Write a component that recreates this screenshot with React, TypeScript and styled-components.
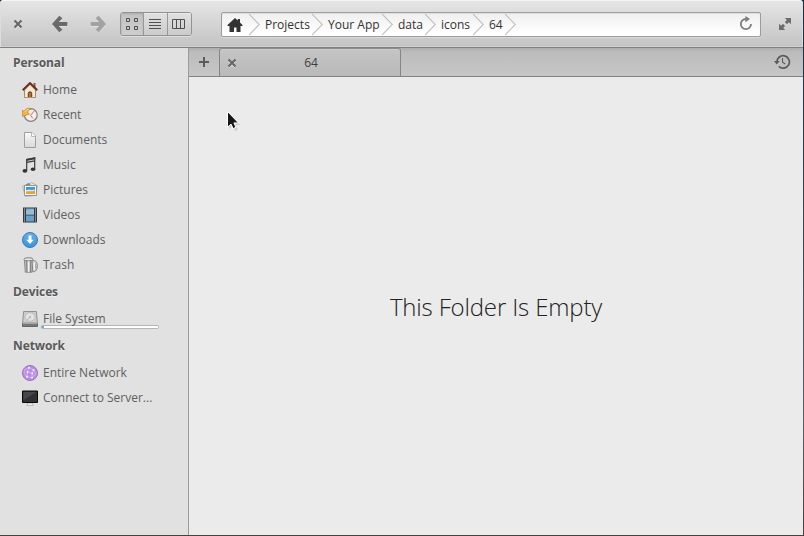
import React from "react";
import styled, { createGlobalStyle } from "styled-components";

const GlobalStyle = createGlobalStyle`
  * { box-sizing: border-box; }
  html, body { margin: 0; padding: 0; overflow: hidden; background: #555353; }
  body { font-family: "Open Sans", "Noto Sans", sans-serif; font-size: 12px; color: #4d4d4d; }
  svg { display: block; flex: none; }
`;

const Desktop = styled.div`
  width: 804px;
  height: 536px;
  background: linear-gradient(to bottom, #16304f 0, #243044 70px, #5d5d60 420px, #4b4040 100%);
  padding: 0 1px 1px 0;
`;

const Window = styled.div`
  height: 535px;
  display: flex;
  flex-direction: column;
  background: #ebebeb;
  border-radius: 4px 4px 0 0;
  overflow: hidden;
`;

const HeaderBar = styled.header`
  height: 48px;
  flex: none;
  display: flex;
  align-items: flex-start;
  padding-top: 12px;
  background: linear-gradient(#e6e6e6, #c3c3c3);
  border-bottom: 1px solid #828282;
  box-shadow: inset 0 1px #f6f6f6, inset 1px 0 #dedede, inset -1px 0 #dedede, inset 0 -1px #cfcfcf;
`;

const IconSlot = styled.div<{ $w: number; $ml: number }>`
  width: ${(p) => p.$w}px;
  margin-left: ${(p) => p.$ml}px;
  height: 24px;
  flex: none;
  display: flex;
  align-items: center;
  justify-content: center;
`;

const ViewSwitch = styled.div`
  margin-left: 14px;
  width: 72px;
  height: 24px;
  flex: none;
  display: grid;
  grid-template-columns: 22px 24px 24px;
  border: 1px solid #939393;
  border-radius: 3px;
  overflow: hidden;
  box-shadow: 0 1px #dedede;
`;

const ViewButton = styled.div<{ $active?: boolean }>`
  display: flex;
  align-items: center;
  justify-content: center;
  background: ${(p) => (p.$active ? "linear-gradient(#c3c3c3, #cecece)" : "linear-gradient(#e1e1e1, #cbcbcb)")};
  box-shadow: ${(p) => (p.$active ? "inset 0 1px 2px #aaa" : "inset 0 1px #e9e9e9")};
  & + & { border-left: 1px solid #989898; }
`;

const PathBar = styled.nav`
  margin-left: 29px;
  width: 540px;
  height: 25px;
  flex: none;
  display: flex;
  padding-left: 5px;
  border: 1px solid #9c9c9c;
  border-radius: 2px;
  background: linear-gradient(#efefef, #fff 90%);
  box-shadow: 0 1px #dadada, inset 0 1px 1px #ddd;
`;

const Crumb = styled.div<{ $w: number }>`
  width: ${(p) => p.$w}px;
  height: 23px;
  flex: none;
  display: flex;
  align-items: center;
  justify-content: space-between;
  white-space: nowrap;
  color: #333;
`;

const CrumbLabel = styled.span`
  padding-left: 4px;
`;

const ReloadSlot = styled.div`
  margin-left: auto;
  padding: 3px 7px 0 0;
`;

const Body = styled.div`
  flex: 1;
  min-height: 0;
  display: flex;
`;

const Sidebar = styled.aside`
  width: 189px;
  flex: none;
  background: #e1e1e1;
  border-right: 1px solid #9b9b9b;
`;

const SectionTitle = styled.div`
  height: 29px;
  padding-left: 13px;
  font-weight: 700;
  line-height: 29px;
  letter-spacing: -0.1px;
  color: #5a5a5a;
  text-shadow: 0 1px #eee;
`;

const Place = styled.div`
  height: 25px;
  padding-left: 22px;
  display: flex;
  align-items: center;
  gap: 5px;
  color: #606060;
`;

const PlaceLabel = styled.div`
  height: 25px;
  line-height: 25px;
  white-space: nowrap;
`;

const DriveLabel = styled.div`
  height: 25px;
  line-height: 25px;
  width: 116px;
`;

const UsageBar = styled.div`
  width: 118px;
  height: 4px;
  margin: -6px 0 0 -2px;
  border: 1px solid #b5b5b5;
  border-left-color: #72aede;
  border-radius: 2px;
  background: linear-gradient(to right, #72aede 2px, #fff 2px);
`;

const Content = styled.main`
  flex: 1;
  display: flex;
  flex-direction: column;
  min-width: 0;
`;

const TabBar = styled.div`
  height: 29px;
  flex: none;
  display: flex;
  background: linear-gradient(#aeaeae 0, #bcbcbc 4px, #c6c6c6 100%);
  border-bottom: 1px solid #838383;
`;

const NewTab = styled.div`
  width: 30px;
  display: flex;
  align-items: center;
  justify-content: center;
`;

const Tab = styled.div`
  width: 182px;
  height: 28px;
  display: grid;
  grid-template-columns: 24px 1fr 22px;
  align-items: center;
  text-align: center;
  background: linear-gradient(#c5c5c5, #b9b9b9);
  border: 1px solid #858585;
  border-bottom: 0;
  border-top-color: #8d8d8d;
  border-radius: 3px 3px 0 0;
  box-shadow: inset 0 1px #cecece;
  color: #3e3e3e;
`;

const TabClose = styled.span`
  padding-left: 7px;
`;

const HistorySlot = styled.div`
  margin-left: auto;
  padding: 6px 12px 0 0;
`;

const EmptyView = styled.section`
  position: relative;
  flex: 1;
  display: flex;
  align-items: center;
  justify-content: center;
  padding-top: 2px;
  background: #ebebeb;
`;

const EmptyMessage = styled.h1`
  margin: 0;
  font-size: 24px;
  font-weight: 300;
  line-height: 34px;
  letter-spacing: -0.16px;
  color: #222;
  white-space: nowrap;
`;

const Pointer = styled.svg`
  position: absolute;
  left: 37px;
  top: 33px;
`;

const CloseIcon = () => (
  <svg width="10" height="10" viewBox="0 0 10 10">
    <path d="M2 3l6 6M8 3L2 9" stroke="#ededed" strokeWidth="1.8" />
    <path d="M1.5 1.5l7 7M8.5 1.5l-7 7" stroke="#666" strokeWidth="2.1" />
  </svg>
);

const ArrowShape = ({ color }: { color: string }) => (
  <svg width="16" height="18" viewBox="0 0 16 18">
    <path d="M8 2.8L2.5 10 9 16.2M2.8 10H16" fill="none" stroke="#eee" strokeWidth="3" />
    <path d="M0 9L7.4 .8 10.4 3.2 6.7 7H15.4V11H6.7L10.4 14.8 7.4 17.2Z" fill={color} />
  </svg>
);

const Flip = styled.span`
  transform: scaleX(-1);
`;

const GridIcon = () => (
  <svg width="12" height="12" viewBox="0 0 12 12" fill="none" stroke="#505050">
    <path d="M.5.5h3v3h-3zM8.5.5h3v3h-3zM.5 8.5h3v3h-3zM8.5 8.5h3v3h-3z" />
  </svg>
);

const ListIcon = () => (
  <svg width="13" height="12" viewBox="0 0 13 12" stroke="#505050">
    <path d="M0 1.5h12M0 4.5h12M0 7.5h12M0 10.5h12" />
  </svg>
);

const ColumnsIcon = () => (
  <svg width="15" height="10" viewBox="0 0 15 10" fill="none" stroke="#505050">
    <path d="M.5.5h12v9H.5zM4.5.5v9M8.5.5v9" />
  </svg>
);

const HomeGlyph = () => (
  <svg width="16" height="16" viewBox="0 0 16 16">
    <path d="M8 1L.5 8v1h2v6H7v-4.5h2.5V15h4V9h2V8L13 5.6V2h-2.2v1.6z" fill="#333" />
  </svg>
);

const Chevron = () => (
  <svg width="12" height="23" viewBox="0 0 12 23" fill="none">
    <path d="M0 1L10.3 11.5 0 22" stroke="#c0c0c0" strokeWidth="1.1" />
  </svg>
);

const ReloadIcon = () => (
  <svg width="14" height="15" viewBox="0 0 14 15">
    <path d="M7 3A5.1 5.1 0 1 0 12 8" fill="none" stroke="#7c7c7c" strokeWidth="1.8" />
    <path d="M6.4 0L11 3 6.4 6.2z" fill="#7c7c7c" />
  </svg>
);

const ExpandIcon = () => (
  <svg width="12" height="12" viewBox="0 0 12 12">
    <path d="M5.8 0H12v6.2L9.9 4.3 8 6.2 5.9 4.1 7.8 2.1zM0 5.8l2.1 1.9L4 5.8l2.1 2.1-1.9 2L6.2 12H0z" fill="#6c6c6c" />
  </svg>
);

const PlusIcon = () => (
  <svg width="11" height="11" viewBox="0 0 11 11">
    <path d="M0 5h10M5 0v10" stroke="#5b5b5b" strokeWidth="2" />
  </svg>
);

const HistoryIcon = () => (
  <svg width="17" height="16" viewBox="0 0 17 16" fill="none" stroke="#5b5b5b">
    <path d="M3 8.4A6.2 6.2 0 1 1 4.8 12.3" strokeWidth="1.7" />
    <path d="M0 7h5.6L2.8 10.5z" fill="#5b5b5b" stroke="none" />
    <path d="M8.5 4v4.3L11.2 10" strokeWidth="1.1" />
  </svg>
);

const HouseIcon = () => (
  <svg width="16" height="16" viewBox="0 0 16 16">
    <path d="M11.5 1h2v5h-2z" fill="#965244" />
    <path d="M2.5 8L8 2.5 13.5 8v7.5h-11z" fill="#f3ead2" stroke="#a78978" />
    <path d="M.7 8.2L8 1l7.3 7.2" fill="none" stroke="#70291c" strokeWidth="1.9" />
    <path d="M6.3 15.5v-4a1.7 1.7 0 0 1 3.4 0v4z" fill="#b8722d" stroke="#623115" />
    <path d="M4 15.5h8" stroke="#b19678" />
  </svg>
);

const RecentIcon = () => (
  <svg width="16" height="16" viewBox="0 0 16 16">
    <circle cx="8.8" cy="8" r="6.4" fill="#f1efed" stroke="#85827f" strokeWidth="1.2" />
    <path d="M8.5 8.3L12.3 4M8.5 8.3l2.3 3" stroke="#d56a52" strokeWidth="1" />
    <path d="M0 3.2l2 1.2C3.8 1 7 .6 9.4 2 7.2 2.4 6 3.6 5.6 5.8L7.4 7 .4 9.4z" fill="#f2b647" stroke="#c08429" strokeWidth=".8" />
    <path d="M3 5c1-2 2.4-2.7 4-2.9" fill="none" stroke="#fbdf9b" strokeWidth=".9" />
  </svg>
);

const DocumentIcon = () => (
  <svg width="16" height="16" viewBox="0 0 16 16">
    <defs>
      <linearGradient id="paper" x2="0" y2="1"><stop stopColor="#fafafa" /><stop offset="1" stopColor="#d8d8d8" /></linearGradient>
    </defs>
    <path d="M2.5.5H10L13.5 4v11.5h-11z" fill="url(#paper)" stroke="#a0a0a0" />
    <path d="M9.5.5v4h4" fill="#fff" stroke="#a8a8a8" strokeWidth=".8" />
  </svg>
);

const MusicIcon = () => (
  <svg width="16" height="16" viewBox="0 0 16 16">
    <path d="M4.7 13.5V2.6l8-1.6v11M5 5.4l7.5-1.5" fill="none" stroke="#3a3a3a" strokeWidth="1.2" />
    <path d="M4.1 2l9.2-1.8v2L4.1 4z" fill="#3a3a3a" />
    <ellipse cx="2.9" cy="13.9" rx="2.4" ry="1.8" fill="#333" />
    <ellipse cx="11" cy="12.2" rx="2.3" ry="1.7" fill="#333" />
  </svg>
);

const PicturesIcon = () => (
  <svg width="16" height="16" viewBox="0 0 16 16">
    <path d="M.6 4.2l9-3.6 5.6 3-1 9.8-11 1z" fill="#e8e8e8" stroke="#a5a5a5" strokeWidth=".8" />
    <path d="M3.6 3L6.4.9 9 2.8z" fill="#4789b8" />
    <path d="M2.5 3.5h12v10h-12z" fill="#f7f7f7" stroke="#929292" />
    <path d="M4 5h9v4H4z" fill="#3f97d6" />
    <path d="M4 9h9v3H4z" fill="#e9a22f" />
    <path d="M4 9.6c3-.8 5 .2 9-1.2v-.9c-3.5 1-6-.2-9 .8z" fill="#d4edf7" />
  </svg>
);

const VideosIcon = () => (
  <svg width="16" height="16" viewBox="0 0 16 16">
    <path d="M1 .5h14v15H1z" fill="#343a40" />
    <path d="M4 1.4h8v6H4z" fill="#7fb0d0" />
    <path d="M4 8.5h8v6.1H4z" fill="#69a1c6" />
    <path d="M4 4l8-2v5.4H4z" fill="#93bdd8" />
    <path d="M2.5 1.5v14M13.5 1.5v14" stroke="#d4d9dd" strokeWidth="1" strokeDasharray="1 1" />
  </svg>
);

const DownloadIcon = () => (
  <svg width="16" height="16" viewBox="0 0 16 16">
    <defs>
      <linearGradient id="blue" x2="0" y2="1"><stop stopColor="#68afe4" /><stop offset="1" stopColor="#3a92e0" /></linearGradient>
    </defs>
    <circle cx="8" cy="8" r="7.5" fill="url(#blue)" stroke="#347bb9" />
    <path d="M6.5 3.5h3v4.3h2.3L8 12 4.2 7.8h2.3z" fill="#fff" />
  </svg>
);

const TrashIcon = () => (
  <svg width="16" height="16" viewBox="0 0 16 16">
    <path d="M2.4 2.8h8.2l-.5 12.4H3.3z" fill="#c3c3c3" stroke="#777" strokeWidth=".8" />
    <path d="M4.6 4l.4 11M8.8 4l-.3 11" stroke="#7f7f7f" />
    <path d="M6.6 4v11" stroke="#f1f1f1" strokeWidth="1.3" />
    <ellipse cx="6.5" cy="2.3" rx="4.6" ry="1.6" fill="#e2e2e2" stroke="#777" strokeWidth=".9" />
    <path d="M10 3.8c4-.8 5.4 1.5 5.4 4.8s-1.5 6.6-4.6 6.1z" fill="#cfcfcf" stroke="#7f7f7f" strokeWidth=".9" />
    <path d="M12.2 5.4v7.3" stroke="#fafafa" strokeWidth="1.2" />
    <path d="M13.7 6.4v5" stroke="#8c8c8c" strokeWidth=".7" />
  </svg>
);

const DriveIcon = () => (
  <svg width="16" height="16" viewBox="0 0 16 16">
    <path d="M1.6.5h12.8l1 11.3H.6z" fill="#cdcdcd" stroke="#909090" />
    <ellipse cx="8" cy="6" rx="5" ry="4.3" fill="#e3e3e3" stroke="#b5b5b5" strokeWidth=".8" />
    <path d="M8 6l-3.4 3.6" stroke="#a2a2a2" strokeWidth=".8" />
    <circle cx="8" cy="6" r="1.2" fill="#bcbcbc" />
    <path d="M.5 12.5h15v3H.5z" fill="#777" stroke="#666" />
    <path d="M1 12.2h14" stroke="#c4c4c4" />
  </svg>
);

const NetworkIcon = () => (
  <svg width="16" height="16" viewBox="0 0 16 16">
    <circle cx="8" cy="8" r="7.5" fill="#b98de0" stroke="#9670c0" />
    <path d="M2.5 4.5L7 2.7l4.5 2L14 9l-4 3.7-5-1L2 8zM7 2.7L5.5 7l4.8 1.1 1.2-3.4M5.5 7L5 11.7M10.3 8.1L10 12.7" fill="none" stroke="#d6bbef" strokeWidth=".8" />
    <g fill="#f7edff">
      <circle cx="7" cy="2.7" r="1" /><circle cx="11.5" cy="5" r="1" /><circle cx="5.5" cy="7" r="1" />
      <circle cx="10.3" cy="8.4" r="1" /><circle cx="5" cy="11.7" r="1" /><circle cx="10" cy="12.7" r=".9" />
    </g>
  </svg>
);

const ServerIcon = () => (
  <svg width="16" height="16" viewBox="0 0 16 16">
    <path d="M5.8 13h4.4l1 2.4H4.8z" fill="#f4f4f4" stroke="#aaa" strokeWidth=".8" />
    <path d="M.5 1h15v11.5H.5z" fill="#303135" stroke="#090909" />
    <path d="M1.5 2h13L1.5 10z" fill="#46474c" />
  </svg>
);

const crumbs = [
  { label: "Projects", width: 63 },
  { label: "Your App", width: 70 },
  { label: "data", width: 43 },
  { label: "icons", width: 48 },
  { label: "64", width: 32 },
];

const personal = [
  { label: "Home", Icon: HouseIcon },
  { label: "Recent", Icon: RecentIcon },
  { label: "Documents", Icon: DocumentIcon },
  { label: "Music", Icon: MusicIcon },
  { label: "Pictures", Icon: PicturesIcon },
  { label: "Videos", Icon: VideosIcon },
  { label: "Downloads", Icon: DownloadIcon },
  { label: "Trash", Icon: TrashIcon },
];

const network = [
  { label: "Entire Network", Icon: NetworkIcon },
  { label: "Connect to Server...", Icon: ServerIcon },
];

const PlaceList = ({ items }: { items: typeof personal }) => (
  <>
    {items.map(({ label, Icon }) => (
      <Place key={label}>
        <Icon />
        <PlaceLabel>{label}</PlaceLabel>
      </Place>
    ))}
  </>
);

export default function App() {
  return (
    <Desktop>
      <GlobalStyle />
      <Window>
        <HeaderBar>
          <IconSlot $w={10} $ml={13}><CloseIcon /></IconSlot>
          <IconSlot $w={16} $ml={29}><ArrowShape color="#6a6a6a" /></IconSlot>
          <IconSlot $w={16} $ml={22}><Flip><ArrowShape color="#a2a2a2" /></Flip></IconSlot>
          <ViewSwitch>
            <ViewButton $active><GridIcon /></ViewButton>
            <ViewButton><ListIcon /></ViewButton>
            <ViewButton><ColumnsIcon /></ViewButton>
          </ViewSwitch>
          <PathBar>
            <Crumb $w={34}><HomeGlyph /><Chevron /></Crumb>
            {crumbs.map((c) => (
              <Crumb key={c.label} $w={c.width}>
                <CrumbLabel>{c.label}</CrumbLabel>
                <Chevron />
              </Crumb>
            ))}
            <ReloadSlot><ReloadIcon /></ReloadSlot>
          </PathBar>
          <IconSlot $w={12} $ml={18}><ExpandIcon /></IconSlot>
        </HeaderBar>
        <Body>
          <Sidebar>
            <SectionTitle>Personal</SectionTitle>
            <PlaceList items={personal} />
            <SectionTitle>Devices</SectionTitle>
            <Place>
              <DriveIcon />
              <DriveLabel>File System<UsageBar /></DriveLabel>
            </Place>
            <SectionTitle>Network</SectionTitle>
            <PlaceList items={network} />
          </Sidebar>
          <Content>
            <TabBar>
              <NewTab><PlusIcon /></NewTab>
              <Tab><TabClose><CloseIcon /></TabClose><span>64</span></Tab>
              <HistorySlot><HistoryIcon /></HistorySlot>
            </TabBar>
            <EmptyView>
              <EmptyMessage>This Folder Is Empty</EmptyMessage>
              <Pointer width="18" height="24" viewBox="0 0 18 24">
                <path d="M3 3v16l3.5-3 2.5 5 3-1.5L9.7 15h4.6z" fill="#888" opacity=".3" />
                <path d="M1.5 1.5v15.8l3.5-3.2 2.1 4.5 2.9-1.3-2.1-4.4h4.6z" fill="#161616" stroke="#fff" />
              </Pointer>
            </EmptyView>
          </Content>
        </Body>
      </Window>
    </Desktop>
  );
}
